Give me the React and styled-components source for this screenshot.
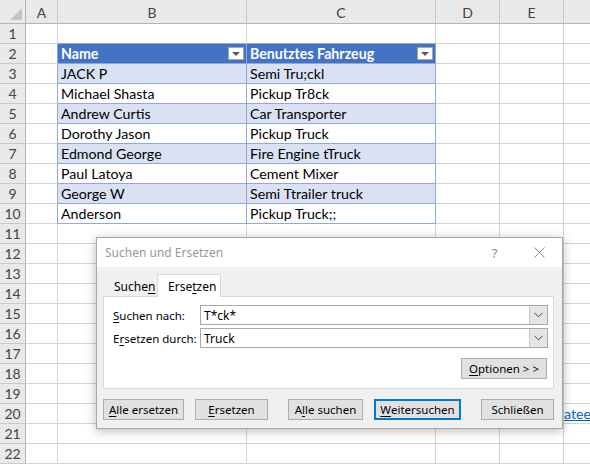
import React from "react";
import styled, { createGlobalStyle, css } from "styled-components";

const Global = createGlobalStyle`
  html, body { margin: 0; padding: 0; background: #fff; overflow: hidden; }
  #root { width: 590px; height: 464px; position: relative; overflow: hidden; }
`;

const XL = `"Lato", "Liberation Sans", sans-serif`;
const UI = `"Noto Sans", "Open Sans", sans-serif`;

const Sheet = styled.div`
  display: grid;
  grid-template-columns: 26px 32px 189px 189px 64px 64px 60px;
  grid-template-rows: 24px repeat(22, 20px);
  font-family: ${XL};
  font-size: 14.2px;
  color: #000;
`;

const ColHead = styled.div`
  box-sizing: border-box;
  background: #e9e9e9;
  border-right: 1px solid #c8c8c8;
  border-bottom: 1px solid #b4b4b4;
  color: #444;
  font-size: 14px;
  display: flex;
  align-items: center;
  justify-content: center;
  padding-top: 1px;
`;

const Corner = styled(ColHead)`
  position: relative;
  border-right: 1px solid #b4b4b4;
  &::after {
    content: "";
    position: absolute;
    right: 3px;
    bottom: 3px;
    width: 0;
    height: 0;
    border-left: 12px solid transparent;
    border-bottom: 12px solid #c4c4c4;
  }
`;

const RowHead = styled.div`
  box-sizing: border-box;
  background: #e9e9e9;
  border-right: 1px solid #b4b4b4;
  border-bottom: 1px solid #c8c8c8;
  color: #444;
  font-size: 14px;
  display: flex;
  align-items: flex-end;
  justify-content: center;
  line-height: 19px;
`;

const Cell = styled.div`
  box-sizing: border-box;
  border-right: 1px solid ${(p) => (p.$edge ? "#8ea9db" : "#d4d4d4")};
  border-bottom: 1px solid ${(p) => (p.$tb ? "#8ea9db" : "#d4d4d4")};
  background: ${(p) => (p.$head ? "#4472c4" : p.$band ? "#d9e1f2" : "#fff")};
  color: ${(p) => (p.$head ? "#fff" : "#000")};
  font-weight: ${(p) => (p.$head ? 700 : 400)};
  padding: 0 3px;
  line-height: 20px;
  white-space: nowrap;
  overflow: hidden;
  display: flex;
  align-items: center;
  justify-content: space-between;
  ${(p) =>
    p.$tbl &&
    css`
      border-right-color: #8ea9db;
      border-bottom-color: #8ea9db;
    `}
`;

const FilterBtn = styled.span`
  box-sizing: border-box;
  width: 16px;
  height: 13px;
  background: #fff;
  border: 1px solid #a6a6a6;
  display: flex;
  align-items: center;
  justify-content: center;
  margin-right: -1px;
  &::after {
    content: "";
    border-left: 4px solid transparent;
    border-right: 4px solid transparent;
    border-top: 4px solid #5a5a5a;
  }
`;

const Link = styled.span`
  color: #0563c1;
  text-decoration: underline;
  margin-left: -3px;
`;

/* ---------- dialog ---------- */

const Dialog = styled.div`
  position: absolute;
  left: 96px;
  top: 237px;
  width: 467px;
  height: 192px;
  box-sizing: border-box;
  border: 1px solid #a8a8a8;
  background: #f0f0f0;
  box-shadow: 0 2px 10px rgba(0, 0, 0, 0.28);
  display: flex;
  flex-direction: column;
  font-family: ${UI};
  font-size: 11.5px;
  color: #000;
`;

const TitleBar = styled.div`
  height: 29px;
  background: #fff;
  display: flex;
  align-items: center;
  padding: 0 0 0 8px;
`;

const Title = styled.div`
  flex: 1;
  color: #999;
  font-size: 12px;
`;

const TitleIcon = styled.div`
  width: 45px;
  height: 29px;
  display: flex;
  align-items: center;
  justify-content: center;
  color: #8a8a8a;
  font-size: 13px;
`;

const Body = styled.div`
  padding: 7px 8px 7px 6px;
  display: flex;
  flex-direction: column;
`;

const Tabs = styled.div`
  display: flex;
  height: 22px;
  align-items: flex-end;
  position: relative;
  z-index: 1;
`;

const Tab = styled.div`
  box-sizing: border-box;
  height: ${(p) => (p.$active ? "23px" : "20px")};
  padding: 0 ${(p) => (p.$active ? "10px" : "9px 0 10px")};
  width: ${(p) => p.$w}px;
  background: ${(p) => (p.$active ? "#fff" : "transparent")};
  border: 1px solid ${(p) => (p.$active ? "#d9d9d9" : "transparent")};
  border-bottom: none;
  margin-bottom: ${(p) => (p.$active ? "-1px" : "0")};
  display: flex;
  align-items: center;
  font-size: 12px;
`;

const Panel = styled.div`
  box-sizing: border-box;
  height: 93px;
  background: #fff;
  border: 1px solid #d9d9d9;
  padding: 8px 5px 0 9px;
  display: flex;
  flex-direction: column;
`;

const FieldRow = styled.div`
  display: flex;
  align-items: center;
  height: 20px;
  margin-bottom: 3px;
`;

const Label = styled.label`
  width: 87px;
  font-size: 11.5px;
  white-space: nowrap;
`;

const Combo = styled.div`
  box-sizing: border-box;
  flex: 1;
  height: 20px;
  border: 1px solid #a9a9a9;
  display: flex;
  align-items: center;
  background: #fff;
`;

const ComboText = styled.div`
  flex: 1;
  padding-left: 3px;
  font-size: 12px;
`;

const ComboBtn = styled.div`
  width: 17px;
  height: 18px;
  background: #e5e5e5;
  border-left: 1px solid #c8c8c8;
  display: flex;
  align-items: center;
  justify-content: center;
`;

const OptRow = styled.div`
  display: flex;
  justify-content: flex-end;
  margin-top: 7px;
  padding-right: 1px;
`;

const Button = styled.button`
  box-sizing: border-box;
  width: ${(p) => p.$w}px;
  height: 21px;
  margin-left: ${(p) => p.$ml || 0}px;
  padding: 0;
  background: #e1e1e1;
  border: ${(p) => (p.$default ? "2px solid #0078d7" : "1px solid #adadad")};
  font-family: ${UI};
  font-size: 11.5px;
  color: #000;
  display: flex;
  align-items: center;
  justify-content: center;
  white-space: nowrap;
`;

const Buttons = styled.div`
  display: flex;
  margin-top: 10px;
`;

const U = styled.span`
  text-decoration: underline;
  text-underline-offset: 2px;
`;

const Chevron = () => (
  <svg width="9" height="6" viewBox="0 0 9 6">
    <path d="M0.5 0.8 L4.5 4.8 L8.5 0.8" fill="none" stroke="#444" strokeWidth="1" />
  </svg>
);

const CloseX = () => (
  <svg width="11" height="11" viewBox="0 0 11 11">
    <path d="M0.5 0.5 L10.5 10.5 M10.5 0.5 L0.5 10.5" stroke="#8a8a8a" strokeWidth="1" />
  </svg>
);

const rows = [
  ["JACK P", "Semi Tru;ckl"],
  ["Michael Shasta", "Pickup Tr8ck"],
  ["Andrew Curtis", "Car Transporter"],
  ["Dorothy Jason", "Pickup Truck"],
  ["Edmond George", "Fire Engine tTruck"],
  ["Paul Latoya", "Cement Mixer"],
  ["George W", "Semi Ttrailer truck"],
  ["Anderson", "Pickup Truck;;"],
];

const cols = ["A", "B", "C", "D", "E", ""];

export default function App() {
  const cells = [];
  cells.push(<Corner key="corner" />);
  cols.forEach((c, i) => cells.push(<ColHead key={"h" + i}>{c}</ColHead>));
  for (let r = 1; r <= 22; r++) {
    cells.push(<RowHead key={"r" + r}>{r}</RowHead>);
    const inTable = r >= 2 && r <= 10;
    const dataIdx = r - 3;
    cells.push(<Cell key={r + "A"} $edge={inTable} />);
    if (r === 1) {
      cells.push(<Cell key={r + "B"} $tb />);
      cells.push(<Cell key={r + "C"} $tb />);
    } else if (r === 2) {
      cells.push(
        <Cell key={r + "B"} $head $tbl>
          Name <FilterBtn />
        </Cell>
      );
      cells.push(
        <Cell key={r + "C"} $head $tbl>
          Benutztes Fahrzeug <FilterBtn />
        </Cell>
      );
    } else if (inTable) {
      const band = r % 2 === 1;
      cells.push(
        <Cell key={r + "B"} $tbl $band={band}>
          {rows[dataIdx][0]}
        </Cell>
      );
      cells.push(
        <Cell key={r + "C"} $tbl $band={band}>
          {rows[dataIdx][1]}
        </Cell>
      );
    } else {
      cells.push(<Cell key={r + "B"} />);
      cells.push(<Cell key={r + "C"} />);
    }
    cells.push(<Cell key={r + "D"} />);
    cells.push(<Cell key={r + "E"} />);
    cells.push(<Cell key={r + "F"}>{r === 20 ? <Link>atee</Link> : null}</Cell>);
  }

  return (
    <>
      <Global />
      <Sheet>{cells}</Sheet>
      <Dialog>
        <TitleBar>
          <Title>Suchen und Ersetzen</Title>
          <TitleIcon>?</TitleIcon>
          <TitleIcon>
            <CloseX />
          </TitleIcon>
        </TitleBar>
        <Body>
          <Tabs>
            <Tab $w={54}>
              Suche<U>n</U>
            </Tab>
            <Tab $active $w={64}>
              Erse<U>t</U>zen
            </Tab>
          </Tabs>
          <Panel>
            <FieldRow>
              <Label>
                <U>S</U>uchen nach:
              </Label>
              <Combo>
                <ComboText>T*ck*</ComboText>
                <ComboBtn>
                  <Chevron />
                </ComboBtn>
              </Combo>
            </FieldRow>
            <FieldRow>
              <Label>
                E<U>r</U>setzen durch:
              </Label>
              <Combo>
                <ComboText>Truck</ComboText>
                <ComboBtn>
                  <Chevron />
                </ComboBtn>
              </Combo>
            </FieldRow>
            <OptRow>
              <Button $w={86}>
                <U>O</U>ptionen &gt; &gt;
              </Button>
            </OptRow>
          </Panel>
          <Buttons>
            <Button $w={81}>
              <U>A</U>lle ersetzen
            </Button>
            <Button $w={73} $ml={11}>
              <U>E</U>rsetzen
            </Button>
            <Button $w={75} $ml={20}>
              A<U>l</U>le suchen
            </Button>
            <Button $w={87} $ml={11} $default>
              <U>W</U>eitersuchen
            </Button>
            <Button $w={73} $ml={20}>
              Schließen
            </Button>
          </Buttons>
        </Body>
      </Dialog>
    </>
  );
}
